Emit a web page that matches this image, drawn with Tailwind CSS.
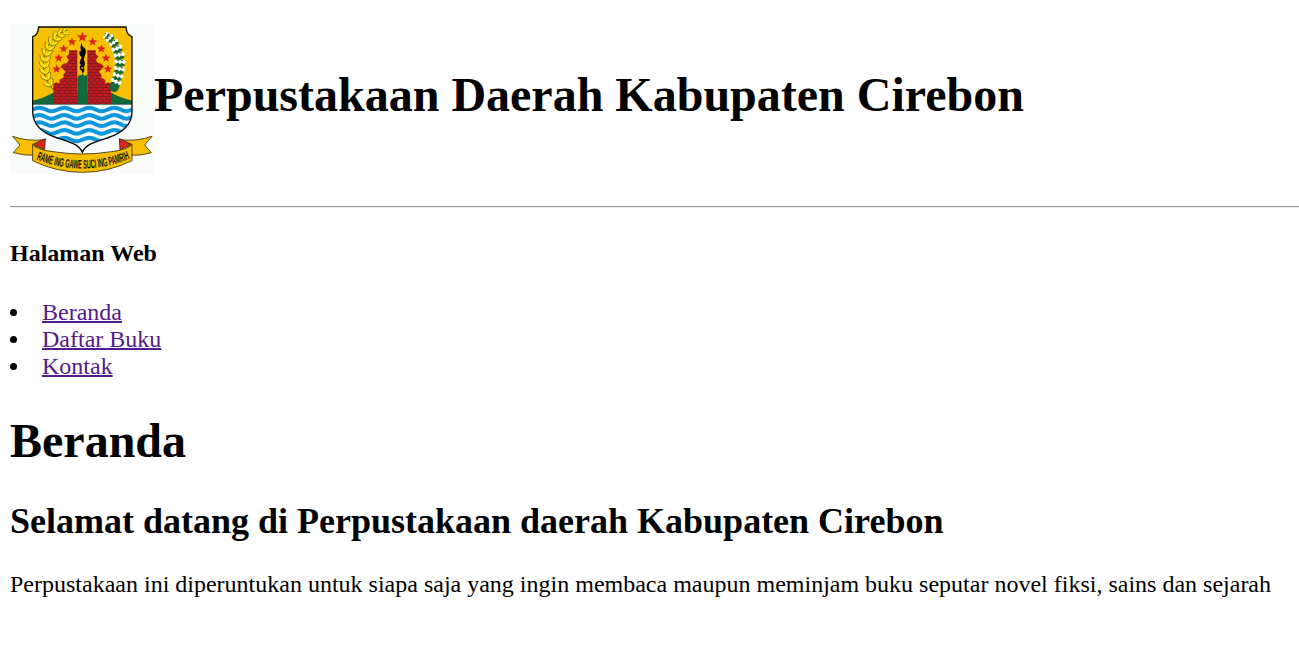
<!DOCTYPE html>
<html lang="id">
<head>
<meta charset="utf-8">
<title>Perpustakaan Daerah Kabupaten Cirebon</title>
<script src="https://cdn.jsdelivr.net/npm/@tailwindcss/browser@4"></script>
</head>
<body class="bg-white text-black overflow-hidden pl-[10px] pt-6 font-['Liberation_Serif',serif] text-2xl leading-[27px]">
<header class="flex h-[150px] items-start">
<svg class="w-[144px] h-[150px] shrink-0" viewBox="30 27 432 450" role="img" aria-label="Lambang Kabupaten Cirebon">
<defs>
<clipPath id="shield"><path d="M116 36H378Q380 61 396 65V290C396 328 366 354 322 369C286 380 256 388 247 412C238 388 208 380 172 369C128 354 98 328 98 290V65Q114 61 116 36Z"/></clipPath>
<pattern id="brick" width="18" height="18" patternUnits="userSpaceOnUse"><path fill="#be1c20" d="M0 0H18V18H0Z"/><path d="M0 1.5H18M0 10.5H18M4 1.5V10.5M13 10.5V19.5" stroke="#7a141b" stroke-width="2.2"/></pattern>
<path id="star" d="M0-14L3.7-4.5 14-4 6 2.4 8.7 12 0 6.5-8.7 12-6 2.4-14-4-3.7-4.5Z"/>
<g id="leaf"><path d="M0 0Q-16-5-17-21Q1-15 0 0Q2-15 15-21Q14-3 0 0Z" fill="#f8e71c"/><path d="M-17-21Q-16-5 0 0Q14-3 15-21" fill="none" stroke="#5f5510" stroke-width="2"/></g>
<g id="bud"><path d="M-13-9L13-9 14 8 0 12-14 8Z" fill="#176a3d"/><path d="M-18-5L-12-11-6-5 0-10 6-5 12-11 18-5 13 3 5-1 0 4-5-1-13 3Z" fill="#fff"/></g>
<path id="wave" d="M80 5C96 5 101-6 118-6S140 5 155 5S177-6 193-6S215 5 230 5S252-6 268-6S290 5 305 5S327-6 343-6S365 5 380 5S396-6 418-6"/>
</defs>
<path d="M30 27H462V477H30Z" fill="#fafcfb"/>
<g clip-path="url(#shield)">
<path d="M90 30H405V268H90Z" fill="#f6c000"/>
<path d="M96 258Q130 250 160 233H334Q361 249 398 257V269H96Z" fill="#12683b"/>
<path d="M160 268V207L170 202 178 206V194L190 188V179L197 170 182 155 190 146 201 144 206 135 199 124 207 117V106H232V268ZM334 268V207L324 202 316 206V194L304 188V179L297 170 312 155 304 146 293 144 288 135 295 124 287 117V106H262V268Z" fill="url(#brick)"/>
<path d="M232 268V187L239 179 244 181 248 176 253 182 262 179V268Z" fill="#12683b"/>
<path d="M96 268H398V415H96Z" fill="#f8fbfc"/>
<g fill="none" stroke="#0c96dd" stroke-width="12">
<use href="#wave" y="284"/><use href="#wave" y="306"/><use href="#wave" y="328"/><use href="#wave" y="351"/><use href="#wave" y="374"/>
</g>
<path d="M96 268H398" stroke="#173d2a" stroke-width="2"/>
</g>
<g fill="#dd241c"><use href="#star" transform="translate(247 66) scale(1.15)"/><use href="#star" transform="translate(216 80) scale(.95)"/><use href="#star" transform="translate(278 80) scale(.95)"/><use href="#star" transform="translate(191 101) scale(.95)"/><use href="#star" transform="translate(304 101) scale(.95)"/><use href="#star" transform="translate(176 129) scale(.95)"/><use href="#star" transform="translate(318 129) scale(.95)"/><use href="#star" transform="translate(170 162) scale(.95)"/><use href="#star" transform="translate(324 162) scale(.95)"/></g>
<path d="M246 81Q244 93 253 98Q260 105 256 117L251 134Q258 145 252 155Q256 164 248 176Q247 168 242 165Q236 158 242 149Q237 144 241 136L245 127Q236 120 238 109Q241 113 243 105Q239 96 246 81Z" fill="#080704"/>
<circle cx="247" cy="159" r="3" fill="#e9b500"/>
<path d="M203 45C151 60 119 117 133 175Q141 211 169 231" fill="none" stroke="#4c4810" stroke-width="2.5"/>
<use href="#leaf" transform="translate(188 54) rotate(65) scale(.8)"/><use href="#leaf" transform="translate(174 64) rotate(54) scale(.9)"/><use href="#leaf" transform="translate(162 76) rotate(43)"/><use href="#leaf" transform="translate(152 91) rotate(32)"/><use href="#leaf" transform="translate(144 107) rotate(23)"/><use href="#leaf" transform="translate(138 124) rotate(14)"/><use href="#leaf" transform="translate(135 142) rotate(5)"/><use href="#leaf" transform="translate(135 160) rotate(-2)"/><use href="#leaf" transform="translate(138 178) rotate(-10)"/><use href="#leaf" transform="translate(144 196) rotate(-20)"/><use href="#leaf" transform="translate(154 214) rotate(-31)"/>
<path d="M330 211Q335 201 347 200L360 207Q357 228 344 232Q327 230 330 211Z" fill="#176a3d"/>
<use href="#bud" transform="translate(319 62) rotate(-55) scale(.65)"/><use href="#bud" transform="translate(331 71) rotate(-46) scale(.8)"/><use href="#bud" transform="translate(343 85) rotate(-35) scale(.9)"/><use href="#bud" transform="translate(352 103) rotate(-22)"/><use href="#bud" transform="translate(358 123) rotate(-11)"/><use href="#bud" transform="translate(360 144) rotate(2)"/><use href="#bud" transform="translate(358 165) rotate(10)"/><use href="#bud" transform="translate(353 185) rotate(16)"/><use href="#bud" transform="translate(347 203) rotate(22)"/>
<path d="M116 36H378Q380 61 396 65V290C396 328 366 354 322 369C286 380 256 388 247 412C238 388 208 380 172 369C128 354 98 328 98 290V65Q114 61 116 36Z" fill="none" stroke="#0b0b0b" stroke-width="4"/>
<g stroke="#3a2c08" stroke-width="2.5" stroke-linejoin="round">
<path d="M38 364Q83 380 136 374L105 400V421Q70 422 40 413L60 390Z" fill="#f6c000"/>
<path d="M456 364Q411 380 358 374L389 400V421Q424 422 454 413L434 390Z" fill="#f6c000"/>
<path d="M99 388L136 371 134 405ZM395 388L358 371 360 405Z" fill="#de251d"/>
<path d="M98 388Q110 404 160 410Q247 424 334 410Q384 404 396 388V437Q325 472 247 472Q169 472 98 437Z" fill="#f6c000"/>
</g>
<path id="motto" d="M106 432Q247 490 388 432" fill="none"/>
<text class="font-['Liberation_Sans',sans-serif] font-bold" font-size="37" fill="#17140a"><textPath href="#motto" startOffset="3" textLength="289" lengthAdjust="spacingAndGlyphs">RAME ING GAWE SUCI ING PAMRIH</textPath></text>
</svg>
<h1 class="mt-[43px] whitespace-nowrap text-5xl leading-[55px] font-bold">Perpustakaan Daerah Kabupaten Cirebon</h1>
</header>
<hr class="mt-8 h-0.5 border-t border-b border-t-[#9a9a9a] border-b-[#eeeeee]">
<h4 class="mt-8 font-bold">Halaman Web</h4>
<ul class="mt-8 text-[#551a8b]">
<li class="flex items-center gap-[25px]"><span class="size-[7px] rounded-full bg-black"></span><a href="#" class="underline decoration-2">Beranda</a></li>
<li class="flex items-center gap-[25px]"><span class="size-[7px] rounded-full bg-black"></span><a href="#" class="underline decoration-2">Daftar Buku</a></li>
<li class="flex items-center gap-[25px]"><span class="size-[7px] rounded-full bg-black"></span><a href="#" class="underline decoration-2">Kontak</a></li>
</ul>
<main>
<h1 class="mt-[33px] text-5xl leading-[55px] font-bold">Beranda</h1>
<h2 class="mt-[33px] text-4xl leading-[41px] font-bold">Selamat datang di Perpustakaan daerah Kabupaten Cirebon</h2>
<p class="mt-[29px] whitespace-nowrap">Perpustakaan ini diperuntukan untuk siapa saja yang ingin membaca maupun meminjam buku seputar novel fiksi, sains dan sejarah</p>
</main>
</body>
</html>
